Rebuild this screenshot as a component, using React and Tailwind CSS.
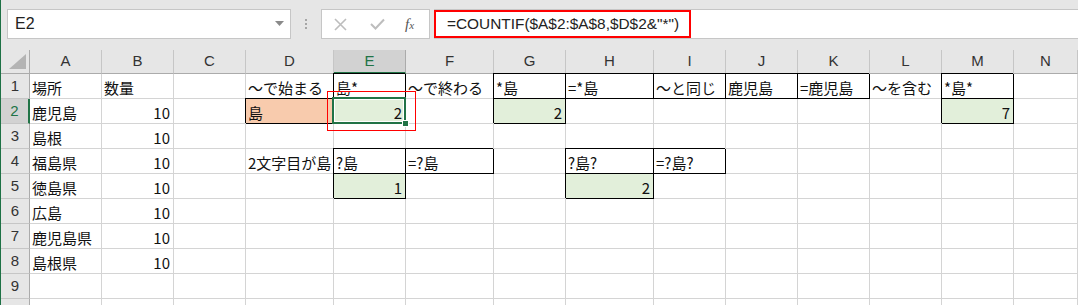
import React from 'react';

const COLS = ['A', 'B', 'C', 'D', 'E', 'F', 'G', 'H', 'I', 'J', 'K', 'L', 'M', 'N'];

// cell data: [row][col] = { v, num, bd, bg }
const ROWS = [
    { A: '場所', B: '数量', D: '～で始まる', E: { v: '島*', bd: true }, F: '～で終わる', G: { v: '*島', bd: true }, H: { v: '=*島', bd: true }, I: { v: '～と同じ', bd: true }, J: { v: '鹿児島', bd: true }, K: { v: '=鹿児島', bd: true }, L: '～を含む', M: { v: '*島*', bd: true } },
    { A: '鹿児島', B: { v: '10', num: true }, D: { v: '島', bd: true, bg: 'orange' }, E: { v: '2', num: true, bd: true, bg: 'green', sel: true }, G: { v: '2', num: true, bd: true, bg: 'green' }, M: { v: '7', num: true, bd: true, bg: 'green' } },
    { A: '島根', B: { v: '10', num: true } },
    { A: '福島県', B: { v: '10', num: true }, D: '2文字目が島', E: { v: '?島', bd: true }, F: { v: '=?島', bd: true }, H: { v: '?島?', bd: true }, I: { v: '=?島?', bd: true } },
    { A: '徳島県', B: { v: '10', num: true }, E: { v: '1', num: true, bd: true, bg: 'green' }, H: { v: '2', num: true, bd: true, bg: 'green' } },
    { A: '広島', B: { v: '10', num: true } },
    { A: '鹿児島県', B: { v: '10', num: true } },
    { A: '島根県', B: { v: '10', num: true } },
    {},
    {},
];

const cellFont = { fontFamily: '"Noto Sans CJK JP", "Liberation Sans", sans-serif' };

function Cell({ data }) {
    const c = typeof data === 'string' ? { v: data } : data || {};
    const bg = c.bg === 'orange' ? 'bg-[#f8cbad]' : c.bg === 'green' ? 'bg-[#e2efda]' : 'bg-white';
    const border = c.bd
        ? 'border-r border-b border-black shadow-[-1px_-1px_0_0_#000]'
        : 'border-r border-b border-[#d4d4d4]';
    return (
        <div className={`relative h-[25px] flex items-center whitespace-nowrap text-[15px] leading-none text-[#111] ${bg} ${border} ${c.num ? 'justify-end pr-[3px]' : 'pl-[2px]'}`}>
            <span className="translate-y-[1px]">{c.v}</span>
            {c.sel && (
                <>
                    <div className="absolute z-10 -left-[2px] -top-[2px] -right-[1px] -bottom-[1px] border-2 border-[#217346] shadow-[inset_0_0_0_1px_#fff]" />
                    <div className="absolute z-20 -right-[4px] -bottom-[4px] w-[7px] h-[7px] bg-[#217346] border border-white" />
                </>
            )}
        </div>
    );
}

export default function App() {
    return (
        <div className="relative w-[1078px] h-[305px] overflow-hidden bg-white border-l border-[#1e7145]" style={{ fontFamily: '"Liberation Sans", sans-serif' }}>
            {/* formula bar */}
            <div className="h-[50px] bg-[#e6e6e6] flex items-start pt-[9px] pl-[6px]">
                <div className="w-[284px] h-[30px] bg-white border border-[#c6c6c6] flex items-center justify-between pl-[7px] pr-[6px] text-[16px] text-[#222]">
                    <span>E2</span>
                    <svg width="9" height="6" viewBox="0 0 9 6"><polygon points="0,0 9,0 4.5,5" fill="#8a8a8a" /></svg>
                </div>
                <div className="w-[30px] h-[30px] flex flex-col items-center justify-center gap-[2px]">
                    <span className="w-[2px] h-[2px] bg-[#a6a6a6]" />
                    <span className="w-[2px] h-[2px] bg-[#a6a6a6]" />
                    <span className="w-[2px] h-[2px] bg-[#a6a6a6]" />
                </div>
                <div className="w-[109px] h-[30px] bg-white border border-[#c6c6c6] flex items-center">
                    <svg className="ml-[12px]" width="13" height="13" viewBox="0 0 13 13"><path d="M1 1 L12 12 M12 1 L1 12" stroke="#bdbdbd" strokeWidth="1.6" /></svg>
                    <svg className="ml-[23px]" width="15" height="12" viewBox="0 0 15 12"><path d="M1 6 L5.5 10.5 L14 1.5" stroke="#bdbdbd" strokeWidth="2" fill="none" /></svg>
                    <span className="ml-[20px] text-[15px] italic text-[#555]" style={{ fontFamily: '"Liberation Serif", serif' }}>f<span className="text-[11px]">x</span></span>
                </div>
                <div className="ml-[4px] flex-1 h-[30px] bg-white border-y border-[#c6c6c6] relative">
                    <div className="absolute left-0 top-0 w-[257px] h-[28px] border-2 border-[#ff0000]" />
                    <div className="pl-[13px] h-full flex items-center text-[15.4px] text-[#222]">=COUNTIF($A$2:$A$8,$D$2&amp;"*")</div>
                </div>
            </div>

            {/* sheet */}
            <div className="relative grid grid-cols-[29px_72px_72px_72px_88px_72px_88px_72px_88px_72px_72px_72px_72px_72px_1fr]">
                {/* column header */}
                <div className="h-[24px] bg-[#e6e6e6] border-r border-b border-[#ababab] flex items-end justify-end pr-[3px] pb-[4px]">
                    <svg width="17" height="15" viewBox="0 0 17 15"><polygon points="17,0 17,15 0,15" fill="#b4b4b4" /></svg>
                </div>
                {COLS.map((c) => (
                    c === 'E' ? (
                        <div key={c} className="h-[24px] bg-[#d2d2d2] border-r border-[#ababab] border-b-2 border-b-[#217346] flex items-center justify-center text-[15px] text-[#217346]">{c}</div>
                    ) : (
                        <div key={c} className="h-[24px] bg-[#e6e6e6] border-r border-r-[#c6c6c6] border-b border-b-[#ababab] flex items-center justify-center text-[15px] text-[#333]">{c}</div>
                    )
                ))}

                {ROWS.map((row, i) => (
                    <React.Fragment key={i}>
                        {i === 1 ? (
                            <div className="h-[25px] bg-[#d2d2d2] border-b border-[#c6c6c6] border-r-2 border-r-[#217346] flex items-center justify-center text-[15px] text-[#217346]">{i + 1}</div>
                        ) : (
                            <div className="h-[25px] bg-[#e6e6e6] border-b border-b-[#c6c6c6] border-r border-r-[#ababab] flex items-center justify-center text-[15px] text-[#333]">{i + 1}</div>
                        )}
                        {COLS.map((c) => (
                            <div key={c} style={cellFont}>
                                <Cell data={row[c]} />
                            </div>
                        ))}
                    </React.Fragment>
                ))}

                {/* annotation around E2 */}
                <div className="absolute z-30 left-[326px] top-[41px] w-[89px] h-[40px] border border-[#ff0000] pointer-events-none" />
            </div>
        </div>
    );
}
